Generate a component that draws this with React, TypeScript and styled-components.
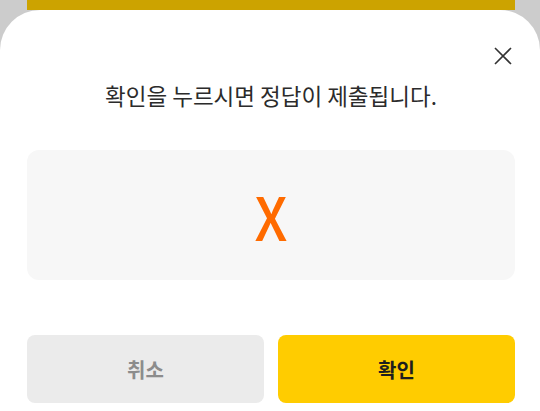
import React from 'react'
import styled, { createGlobalStyle } from 'styled-components'

const GlobalStyle = createGlobalStyle`
  html, body {
    margin: 0;
    padding: 0;
    background: #cccccc;
    font-family: "Noto Sans CJK KR", "Noto Sans", sans-serif;
  }
`

const Screen = styled.div`
  width: 540px;
  height: 411px;
  overflow: hidden;
  display: flex;
  flex-direction: column;
  background: #cccccc;
`

// yellow header behind the dim overlay
const DimmedBar = styled.div`
  height: 10px;
  margin: 0 25px 0 27px;
  background: #cca300;
  flex-shrink: 0;
`

const Sheet = styled.section`
  flex: 1;
  background: #ffffff;
  border-radius: 40px 40px 0 0;
  padding: 34px 25px 0 27px;
  display: flex;
  flex-direction: column;
`

const TopRow = styled.div`
  display: flex;
  justify-content: flex-end;
`

const CloseButton = styled.button`
  width: 24px;
  height: 24px;
  padding: 0;
  border: none;
  background: none;
  display: flex;
  align-items: center;
  justify-content: center;
  cursor: pointer;
`

const Message = styled.p`
  margin: 12px 0 0;
  font-size: 22.5px;
  line-height: 30px;
  color: #2b2b2b;
  text-align: center;
`

const AnswerBox = styled.div`
  margin-top: 40px;
  height: 130px;
  border-radius: 12px;
  background: #f7f7f7;
  display: flex;
  align-items: center;
  justify-content: center;
`

const Answer = styled.span`
  font-family: "Noto Sans CJK KR", sans-serif;
  font-size: 60px;
  font-weight: 500;
  line-height: 1;
  color: #ff6b00;
  display: inline-block;
  transform: scaleX(0.92);
`

const Actions = styled.div`
  margin-top: 55px;
  display: grid;
  grid-template-columns: 1fr 1fr;
  gap: 14px;
`

const ActionButton = styled.button<{ $primary?: boolean }>`
  height: 68px;
  border: none;
  border-radius: 8px;
  font-family: "Noto Sans CJK KR", sans-serif;
  font-size: 20px;
  font-weight: 700;
  background: ${p => (p.$primary ? '#ffcc00' : '#ebebeb')};
  color: ${p => (p.$primary ? '#1e1e1e' : '#8c8c8c')};
  cursor: pointer;
`

const App = () => {
  return (
    <Screen>
      <GlobalStyle />
      <DimmedBar />
      <Sheet>
        <TopRow>
          <CloseButton aria-label="닫기">
            <svg width="20" height="20" viewBox="0 0 20 20">
              <path d="M2 2 L18 18 M18 2 L2 18" stroke="#333" strokeWidth="1.6" fill="none" />
            </svg>
          </CloseButton>
        </TopRow>
        <Message>확인을 누르시면 정답이 제출됩니다.</Message>
        <AnswerBox>
          <Answer>X</Answer>
        </AnswerBox>
        <Actions>
          <ActionButton>취소</ActionButton>
          <ActionButton $primary>확인</ActionButton>
        </Actions>
      </Sheet>
    </Screen>
  )
}

export default App
